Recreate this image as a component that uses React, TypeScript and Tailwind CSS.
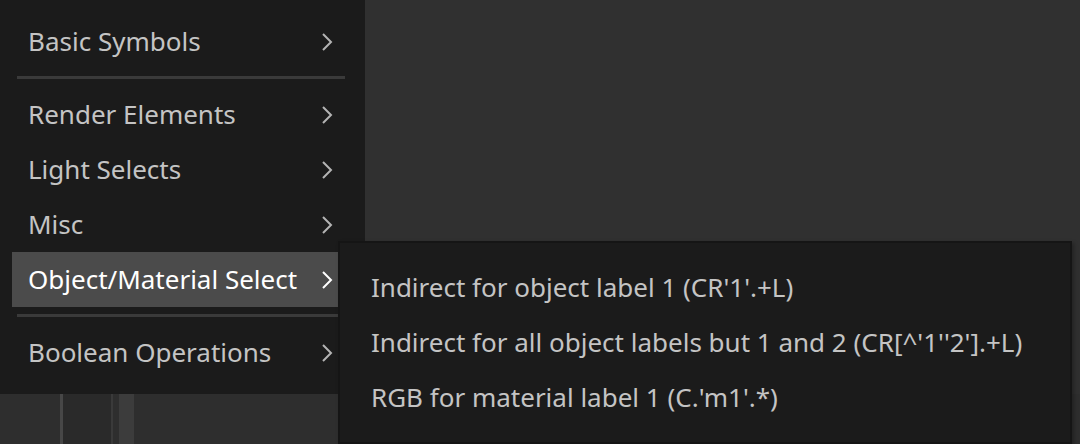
import React from 'react';

const Chevron = ({ active }: { active?: boolean }) => (
  <svg width="12" height="20" viewBox="0 0 12 20" className={active ? 'text-white' : 'text-[#b4b4b4]'}>
    <path d="M2 2 L10 10 L2 18" fill="none" stroke="currentColor" strokeWidth="2" />
  </svg>
);

const MenuItem = ({ label, active }: { label: string; active?: boolean }) => (
  <div
    className={`flex h-[55px] items-center justify-between pl-[16px] pr-[5px] ${
      active ? 'bg-[#4b4b4b] text-white' : 'text-[#c4c4c4]'
    }`}
  >
    <span>{label}</span>
    <Chevron active={active} />
  </div>
);

const Separator = () => <div className="ml-[5px] mr-[-7px] mb-[8px] mt-[7px] h-[3px] bg-[#3a3a3a]" />;

export default function App() {
  const subItems = [
    "Indirect for object label 1 (CR'1'.+L)",
    "Indirect for all object labels but 1 and 2 (CR[^'1''2'].+L)",
    "RGB for material label 1 (C.'m1'.*)",
  ];

  return (
    <div
      className="relative h-[444px] w-[1080px] overflow-hidden bg-[#303030] text-[26px]"
      style={{ fontFamily: '"Noto Sans", "Open Sans", sans-serif' }}
    >
      <div className="flex h-full flex-col">
        <div className="w-[365px] bg-[#1b1b1b] pb-[14px] pl-[12px] pr-[27px] pt-[14px]">
          <MenuItem label="Basic Symbols" />
          <Separator />
          <MenuItem label="Render Elements" />
          <MenuItem label="Light Selects" />
          <MenuItem label="Misc" />
          <MenuItem label="Object/Material Select" active />
          <Separator />
          <MenuItem label="Boolean Operations" />
        </div>
        <div className="flex flex-1 bg-[#2e2e2e]">
          <div className="ml-[60px] w-[3px] bg-[#474747]" />
          <div className="w-[48px] bg-[#2a2a2a]" />
          <div className="w-[2px] bg-[#3a3a3a]" />
          <div className="ml-[6px] w-[15px] bg-[#3c3c3c]" />
        </div>
      </div>

      <div className="absolute left-[338px] top-[241px] w-[734px] border-2 border-[#151515] bg-[#1b1b1b] py-[17px] pl-[31px] text-[#c4c4c4] shadow-[2px_2px_4px_rgba(0,0,0,0.3)]">
        {subItems.map((s) => (
          <div key={s} className="flex h-[55px] items-center">
            {s}
          </div>
        ))}
      </div>
    </div>
  );
}
